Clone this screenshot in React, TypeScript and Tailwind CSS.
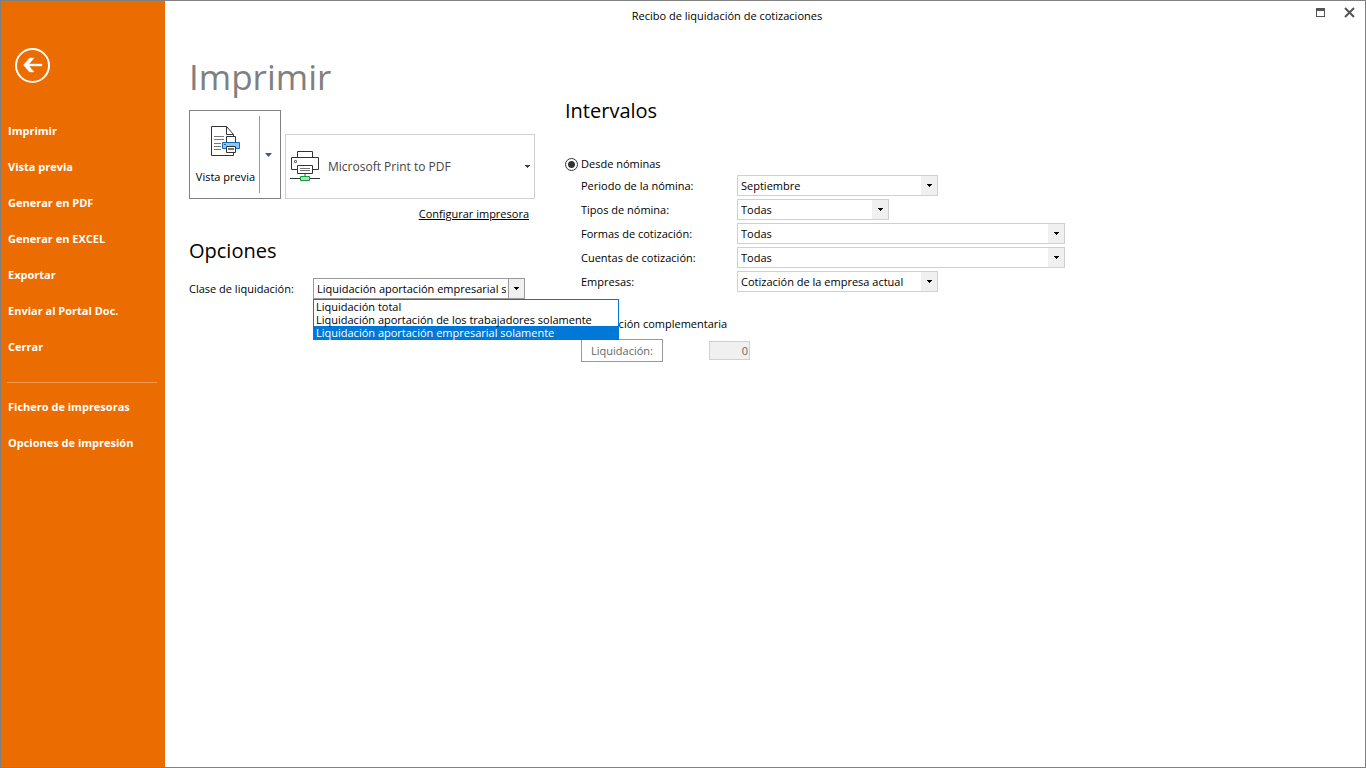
import { useState } from 'react';

const menu = [
  'Imprimir',
  'Vista previa',
  'Generar en PDF',
  'Generar en EXCEL',
  'Exportar',
  'Enviar al Portal Doc.',
  'Cerrar',
];

const menuImpresoras = ['Fichero de impresoras', 'Opciones de impresión'];

const clases = [
  'Liquidación total',
  'Liquidación aportación de los trabajadores solamente',
  'Liquidación aportación empresarial solamente',
];

const intervalos = [
  { id: 'periodo', label: 'Periodo de la nómina:', value: 'Septiembre', width: 'w-[201px]' },
  { id: 'tipos', label: 'Tipos de nómina:', value: 'Todas', width: 'w-[152px]' },
  { id: 'formas', label: 'Formas de cotización:', value: 'Todas', width: 'w-[328px]' },
  { id: 'cuentas', label: 'Cuentas de cotización:', value: 'Todas', width: 'w-[328px]' },
  { id: 'empresas', label: 'Empresas:', value: 'Cotización de la empresa actual', width: 'w-[201px]' },
];

function Caret() {
  return (
    <svg viewBox="0 0 5 3" className="w-[5px] h-[3px]" shapeRendering="crispEdges" aria-hidden="true">
      <path d="M0 0h5v1H4v1H3v1H2V2H1V1H0z" fill="currentColor" />
    </svg>
  );
}

function PreviewIcon() {
  return (
    <svg viewBox="0 0 30 30" className="w-[30px] h-[30px]" fill="none" aria-hidden="true">
      <path d="M15.5 .5H.5v29h22V8.5z" fill="#fff" stroke="#333" />
      <path d="M15.5 .5v8h7" stroke="#333" />
      <path d="M3 10.5h10M3 13.5h10M3 17.5h7M3 20.5h7M3 23.5h7" stroke="#777" />
      <path d="M15.5 10.5h9v7h-9z" fill="#fff" stroke="#333" />
      <path d="M11.5 16.5h17v6h-17z" fill="#92c5ee" stroke="#0f6cbd" />
      <path d="M13 18.5h2" stroke="#0f6cbd" />
      <path d="M15.5 20.5h9v6h-9z" fill="#fff" stroke="#333" />
      <path d="M17 23h6" stroke="#777" strokeWidth="2" />
    </svg>
  );
}

function PrinterIcon() {
  return (
    <svg viewBox="0 0 30 31" className="w-[30px] h-[31px] shrink-0" fill="none" aria-hidden="true">
      <path d="M7.5 6V.5h15V6" stroke="#333" />
      <path d="M7.5 18.5h-6v-12h27v12h-6" stroke="#333" />
      <path d="M4.5 9.5h2v2h-2z" stroke="#777" />
      <path d="M7.5 14.5h15v8h-15z" fill="#fff" stroke="#333" />
      <path d="M10 17.5h10M10 19.5h10" stroke="#777" />
      <path d="M15 23v2" stroke="#aaa" strokeWidth="2" />
      <path d="M0 27.5h30" stroke="#333" />
      <path d="M10.5 25.5h9v4h-9z" fill="#b8dcb8" stroke="#0f9d3f" />
    </svg>
  );
}

export default function App() {
  const [clase, setClase] = useState(2);
  const [abierto, setAbierto] = useState(true);

  return (
    <div className="flex min-h-screen border border-[#808080] bg-white font-['Open_Sans',sans-serif] text-[11px] leading-4 text-black">
      {/* Menú lateral */}
      <aside className="w-[164px] shrink-0 bg-[#eb6c00] text-white">
        <button type="button" aria-label="Volver" className="block ml-3.5 mt-[47px]">
          <svg viewBox="0 0 35 35" className="w-[35px] h-[35px]" aria-hidden="true">
            <circle cx="17.5" cy="17.5" r="16.5" fill="none" stroke="#fff" strokeWidth="2" />
            <path d="M8.5 17l6-7H19l-5 6h13v2H14l5 6h-4.5z" fill="#fff" stroke="#fff" strokeWidth=".4" />
          </svg>
        </button>
        <nav className="pt-[30px] font-bold">
          {menu.map((item) => (
            <a key={item} href="#" className="flex h-9 items-center px-[7px]">
              {item}
            </a>
          ))}
          <hr className="ml-1.5 mr-2 mt-[17px] mb-1.5 border-[#f19a4f]" />
          {menuImpresoras.map((item) => (
            <a key={item} href="#" className="flex h-9 items-center px-[7px]">
              {item}
            </a>
          ))}
        </nav>
      </aside>

      <div className="flex-1">
        <header className="flex h-8 items-start">
          <p className="flex-1 pt-[7px] text-center">Recibo de liquidación de cotizaciones</p>
          <div className="flex w-[76px] gap-[18px] pl-[26px] pt-1.5 text-[#555]">
            <button type="button" aria-label="Maximizar">
              <svg viewBox="0 0 11 11" className="w-[11px] h-[11px]" shapeRendering="crispEdges" aria-hidden="true">
                <path d="M1 1h9v9H1zM2 4v5h7V4z" fill="currentColor" fillRule="evenodd" />
              </svg>
            </button>
            <button type="button" aria-label="Cerrar ventana">
              <svg viewBox="0 0 11 11" className="w-[11px] h-[11px]" aria-hidden="true">
                <path d="M1 1l9 9M10 1l-9 9" stroke="currentColor" strokeWidth="2" />
              </svg>
            </button>
          </div>
        </header>

        <main className="flex pl-6">
          <section className="w-[376px] shrink-0 pt-5">
            <h1 className="text-[35px] leading-[48px] text-[#808080]">Imprimir</h1>

            <div className="mt-[9px] flex items-end gap-1">
              <div className="flex h-[89px] w-[92px] border border-[#808080]">
                <button type="button" className="flex w-[69px] flex-col items-center pl-0.5 pt-[15px]">
                  <PreviewIcon />
                  <span className="mt-[13px] whitespace-nowrap">Vista previa</span>
                </button>
                <button
                  type="button"
                  aria-label="Más opciones de vista previa"
                  className="my-[5px] flex flex-1 items-center border-l border-[#999] pl-[5px] text-[#3f5b87]"
                >
                  <svg viewBox="0 0 7 4" className="w-[7px] h-[4px]" aria-hidden="true">
                    <path d="M0 0h7L3.5 4z" fill="currentColor" />
                  </svg>
                </button>
              </div>
              <button
                type="button"
                className="flex h-[65px] w-[250px] items-center border border-[#d0d0d0] pl-1 pr-1 text-[12px] text-[#444]"
              >
                <PrinterIcon />
                <span className="flex-1 pl-2 text-left">Microsoft Print to PDF</span>
                <Caret />
              </button>
            </div>

            <div className="mt-[7px] w-[340px] text-right">
              <a href="#" className="underline">
                Configurar impresora
              </a>
            </div>

            <h2 className="mt-[15px] text-[20px] leading-7">Opciones</h2>

            <div className="mt-[13px] flex items-center">
              <label htmlFor="clase" className="w-[124px]">
                Clase de liquidación:
              </label>
              <div className="relative">
                <select
                  id="clase"
                  value={clase}
                  onMouseDown={(e) => {
                    e.preventDefault();
                    setAbierto(!abierto);
                  }}
                  onChange={(e) => setClase(Number(e.target.value))}
                  className="block h-[21px] w-[212px] appearance-none border border-[#999] bg-white pl-[3px] pr-[18px] outline-none"
                >
                  {clases.map((texto, i) => (
                    <option key={texto} value={i}>
                      {texto}
                    </option>
                  ))}
                </select>
                <span className="pointer-events-none absolute inset-y-0 right-0 flex w-[17px] items-center justify-center border border-[#999] bg-[#f0f0f0]">
                  <Caret />
                </span>
                {abierto && (
                  <ul
                    role="listbox"
                    aria-label="Clase de liquidación"
                    className="absolute left-0 top-full z-10 w-[306px] border border-[#0078d7] bg-white"
                  >
                    {clases.map((texto, i) => (
                      <li
                        key={texto}
                        role="option"
                        aria-selected={i === clase}
                        onClick={() => {
                          setClase(i);
                          setAbierto(false);
                        }}
                        className={
                          i === clase
                            ? 'h-[13px] whitespace-nowrap bg-[#0078d7] pl-0.5 leading-[13px] text-white'
                            : 'h-[13px] whitespace-nowrap pl-0.5 leading-[13px]'
                        }
                      >
                        {texto}
                      </li>
                    ))}
                  </ul>
                )}
              </div>
            </div>
          </section>

          <section className="flex-1 pt-16">
            <h2 className="text-[20px] leading-7">Intervalos</h2>

            <label className="mt-[30px] flex h-[18px] items-center gap-[3px]">
              <input
                type="radio"
                name="origen"
                defaultChecked
                className="h-[13px] w-[13px] appearance-none rounded-full border border-[#333] bg-white checked:bg-[radial-gradient(circle,#333_0_3px,#fff_4px)]"
              />
              Desde nóminas
            </label>

            <div className="mt-0.5 flex flex-col gap-[3px] pl-4">
              {intervalos.map((fila) => (
                <div key={fila.id} className="flex items-center">
                  <label htmlFor={fila.id} className="w-[156px]">
                    {fila.label}
                  </label>
                  <div className="relative">
                    <select
                      id={fila.id}
                      className={`block h-[21px] appearance-none border border-[#d0d0d0] bg-white pl-[3px] pr-[18px] ${fila.width}`}
                    >
                      <option>{fila.value}</option>
                    </select>
                    <span className="pointer-events-none absolute inset-y-px right-px flex w-4 items-center justify-center bg-[#f0f0f0]">
                      <Caret />
                    </span>
                  </div>
                </div>
              ))}
            </div>

            <label className="mt-[23px] flex h-[18px] items-center gap-[3px]">
              <input type="checkbox" className="h-[13px] w-[13px]" />
              Liquidación complementaria
            </label>

            <div className="mt-1.5 flex items-center pl-4 text-[#666]">
              <button type="button" className="h-[23px] w-[82px] border border-[#999]">
                Liquidación:
              </button>
              <input
                type="text"
                aria-label="Número de liquidación"
                defaultValue="0"
                disabled
                className="ml-[46px] h-[19px] w-[41px] border border-[#d0d0d0] bg-[#f0f0f0] px-px text-right"
              />
            </div>
          </section>
        </main>
      </div>
    </div>
  );
}
